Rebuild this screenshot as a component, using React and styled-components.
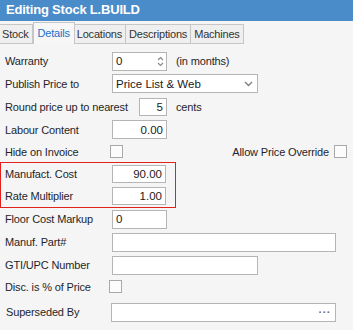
import React from 'react';
import styled, { createGlobalStyle } from 'styled-components';

const GlobalStyle = createGlobalStyle`
  html, body {
    margin: 0;
    padding: 0;
    background: #f5f5f5;
  }
  body {
    font-family: "Liberation Sans", Arial, sans-serif;
    font-size: 11px;
    color: #1f1f2a;
  }
`;

const TABS = ['Stock', 'Details', 'Locations', 'Descriptions', 'Machines'];

const App = () => {
  return (
    <Window>
      <GlobalStyle />
      <TitleBar>Editing Stock L.BUILD</TitleBar>

      <TabStrip>
        {TABS.map((tab) => (
          <Tab key={tab} $active={tab === 'Details'}>
            {tab}
          </Tab>
        ))}
      </TabStrip>

      <Form>
        <Row $h={22}>
          <Label>Warranty</Label>
          <Input $w={55} $h={19}>
            <Value $left>0</Value>
            <Spinner>
              <svg width="7" height="11" viewBox="0 0 7 11">
                <path d="M1 4 L3.5 1.5 L6 4" fill="none" stroke="#8a8a8a" strokeWidth="1.2" />
                <path d="M1 7 L3.5 9.5 L6 7" fill="none" stroke="#8a8a8a" strokeWidth="1.2" />
              </svg>
            </Spinner>
          </Input>
          <Suffix>(in months)</Suffix>
        </Row>

        <Row $h={23}>
          <Label>Publish Price to</Label>
          <Input $w={146} $h={19}>
            <Value $left>Price List &amp; Web</Value>
            <Chevron>
              <svg width="9" height="6" viewBox="0 0 9 6">
                <path d="M1 1 L4.5 4.5 L8 1" fill="none" stroke="#808080" strokeWidth="1.4" />
              </svg>
            </Chevron>
          </Input>
        </Row>

        <Row $h={23}>
          <Label>Round price up to nearest</Label>
          <Input $w={28} $h={18} $offset={27}>
            <Value>5</Value>
          </Input>
          <Suffix>cents</Suffix>
        </Row>

        <Row $h={23}>
          <Label>Labour Content</Label>
          <Input $w={55} $h={19}>
            <Value>0.00</Value>
          </Input>
        </Row>

        <Row $h={21}>
          <Label>Hide on Invoice</Label>
          <Check $offset={-2} />
          <Spacer />
          <Label $auto>Allow Price Override</Label>
          <Check $offset={5} />
        </Row>

        <Highlight>
          <Row $h={22} $inBox>
            <Label>Manufact. Cost</Label>
            <Input $w={54} $h={18}>
              <Value>90.00</Value>
            </Input>
          </Row>
          <Row $h={22} $inBox>
            <Label>Rate Multiplier</Label>
            <Input $w={54} $h={18}>
              <Value>1.00</Value>
            </Input>
          </Row>
        </Highlight>

        <Row $h={22}>
          <Label>Floor Cost Markup</Label>
          <Input $w={55} $h={19}>
            <Value $left>0</Value>
          </Input>
        </Row>

        <Row $h={24}>
          <Label>Manuf. Part#</Label>
          <Input $w={224} $h={19} />
        </Row>

        <Row $h={22}>
          <Label>GTI/UPC Number</Label>
          <Input $w={146} $h={19} />
        </Row>

        <Row $h={21}>
          <Label>Disc. is % of Price</Label>
          <Check $offset={-3} />
        </Row>

        <Row $h={30}>
          <Label $shift={1}>Superseded By</Label>
          <Input $w={225} $h={19} $offset={-2}>
            <Dots>···</Dots>
          </Input>
        </Row>
      </Form>
    </Window>
  );
};

const Window = styled.div`
  width: 353px;
  height: 330px;
  overflow: hidden;
  background: #f5f5f5;
`;

const TitleBar = styled.div`
  height: 21px;
  background: #4a8bc9;
  color: #fff;
  font-weight: bold;
  font-size: 13px;
  letter-spacing: -0.2px;
  line-height: 20px;
  padding-left: 6px;
`;

const TabStrip = styled.div`
  display: flex;
  align-items: flex-end;
  height: 23px;
  border-bottom: 0;
`;

const Tab = styled.div`
  height: ${(p) => (p.$active ? '22px' : '20px')};
  box-sizing: border-box;
  display: flex;
  align-items: center;
  justify-content: center;
  padding: ${(p) => (p.$active ? '0 4px 2px' : '0 3px')};
  border: 1px solid #c6c6c6;
  border-left: ${(p) => (p.$active ? '1px solid #c6c6c6' : '0')};
  border-bottom: ${(p) => (p.$active ? '0' : '1px solid #c6c6c6')};
  margin-right: ${(p) => (p.$active ? '-1px' : '0')};
  position: ${(p) => (p.$active ? 'relative' : 'static')};
  background: ${(p) => (p.$active ? '#f7f7f7' : '#efefef')};
  color: ${(p) => (p.$active ? '#1c6fc8' : '#333')};
  font-size: 11px;
  letter-spacing: -0.2px;
  &:first-child {
    border-left: 0;
    padding-left: 2px;
  }
`;

const Form = styled.div`
  padding-top: 6px;
`;

const Row = styled.div`
  display: flex;
  align-items: center;
  height: ${(p) => p.$h}px;
  padding-left: ${(p) => (p.$inBox ? '4px' : '5px')};
  padding-right: 6px;
`;

const Label = styled.span`
  flex: none;
  width: ${(p) => (p.$auto ? 'auto' : '107px')};
  padding-left: ${(p) => p.$shift || 0}px;
  letter-spacing: -0.15px;
  white-space: nowrap;
`;

const Input = styled.div`
  flex: none;
  box-sizing: border-box;
  display: flex;
  align-items: center;
  width: ${(p) => p.$w}px;
  height: ${(p) => p.$h}px;
  margin-left: ${(p) => p.$offset || 0}px;
  background: #fff;
  border: 1px solid #b5b5b5;
  padding: 0 3px;
  font-size: 11.5px;
`;

const Value = styled.span`
  flex: 1;
  text-align: ${(p) => (p.$left ? 'left' : 'right')};
  color: #1a1a1a;
  white-space: nowrap;
  overflow: hidden;
`;

const Spinner = styled.span`
  display: flex;
  margin-right: -1px;
`;

const Chevron = styled.span`
  display: flex;
  margin-right: 1px;
`;

const Dots = styled.span`
  margin-left: auto;
  color: #6e6e6e;
  font-weight: bold;
  font-size: 11px;
  letter-spacing: 0.5px;
  margin-right: 1px;
`;

const Suffix = styled.span`
  margin-left: 9px;
  letter-spacing: -0.15px;
`;

const Check = styled.span`
  flex: none;
  box-sizing: border-box;
  width: 13px;
  height: 13px;
  margin-left: ${(p) => p.$offset || 0}px;
  background: #fcfcfc;
  border: 1px solid #a9a9a9;
`;

const Spacer = styled.span`
  flex: 1;
`;

const Highlight = styled.div`
  width: 176px;
  box-sizing: border-box;
  border: 1px solid #e3201b;
`;

export default App;
